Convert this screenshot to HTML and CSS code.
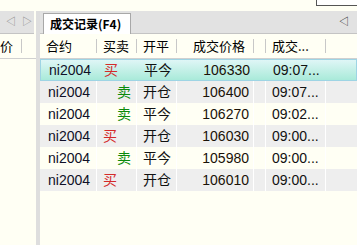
FILE: index.html
```html
<!DOCTYPE html>
<html>
<head>
    <meta charset="UTF-8" />
    <title>成交记录</title>
    <link rel="stylesheet" href="styles.css">
</head>
<body>
    <div class="top-strip">
        <div class="top-box"></div>
    </div>
    <div class="main">
        <div class="side">
            <div class="tab-bar side-bar">
                <span class="arrow">&#9665;</span>
                <span class="arrow">&#9655;</span>
            </div>
            <div class="head side-head">
                <div class="hcell">价</div>
            </div>
        </div>
        <div class="divider"></div>
        <div class="panel">
            <div class="tab-bar">
                <div class="tab">成交记录(F4)</div>
                <span class="arrow scroll">&#9665;</span>
            </div>
            <div class="row head">
                <div class="hcell">合约</div>
                <div class="hcell">买卖</div>
                <div class="hcell">开平</div>
                <div class="hcell price-head">成交价格</div>
                <div class="hcell"></div>
                <div class="hcell">成交...</div>
                <div></div>
            </div>
            <div id="rows"></div>
        </div>
    </div>

    <script>
        const trades = [
            { code: 'ni2004', side: '买', open: '平今', price: 106330, time: '09:07...' },
            { code: 'ni2004', side: '卖', open: '开仓', price: 106400, time: '09:07...' },
            { code: 'ni2004', side: '卖', open: '平今', price: 106270, time: '09:02...' },
            { code: 'ni2004', side: '买', open: '开仓', price: 106030, time: '09:00...' },
            { code: 'ni2004', side: '卖', open: '平今', price: 105980, time: '09:00...' },
            { code: 'ni2004', side: '买', open: '开仓', price: 106010, time: '09:00...' }
        ];

        const rows = document.getElementById('rows');
        trades.forEach((t, i) => {
            const row = document.createElement('div');
            row.className = 'row data' + (i === 0 ? ' selected' : (i % 2 ? ' odd' : ''));
            const sideClass = t.side === '买' ? 'buy' : 'sell';
            row.innerHTML =
                '<div class="cell code">' + t.code + '</div>' +
                '<div class="cell ' + sideClass + '">' + t.side + '</div>' +
                '<div class="cell">' + t.open + '</div>' +
                '<div class="cell price">' + t.price + '</div>' +
                '<div class="cell"></div>' +
                '<div class="cell">' + t.time + '</div>' +
                '<div class="cell last"></div>';
            rows.appendChild(row);
        });
    </script>
</body>
</html>
```

FILE: styles.css
```css
* {
    margin: 0;
    padding: 0;
    box-sizing: border-box;
}

body {
    background: #fffff4;
    font-family: "Liberation Sans", "Noto Sans CJK SC", sans-serif;
    font-size: 14px;
    color: #111;
    overflow: hidden;
}

.top-strip {
    height: 11px;
    display: flex;
    justify-content: flex-end;
}

.top-box {
    width: 41px;
    height: 6px;
    background: #fff;
    border-left: 1px solid #555;
    border-bottom: 1px solid #555;
}

.main {
    display: flex;
    height: 234px;
}

.side {
    width: 36px;
}

.divider {
    width: 4px;
    background: #dedede;
}

.panel {
    flex: 1;
}

.tab-bar {
    height: 23px;
    background: #e2e2e2;
    border-bottom: 1px solid #c4c4c4;
    display: flex;
    align-items: flex-end;
    padding-left: 3px;
}

.side-bar {
    width: 34px;
    align-items: center;
    padding-left: 6px;
    gap: 6px;
}

.arrow {
    font-size: 10px;
    color: #888;
    line-height: 1;
}

.scroll {
    margin-left: auto;
    margin-right: 8px;
    align-self: center;
    color: #222;
}

.tab {
    height: 21px;
    width: 88px;
    margin-bottom: -1px;
    background: #fff;
    border: 1px solid #a8a8a8;
    border-bottom: none;
    padding-left: 6px;
    font-family: "Noto Sans CJK SC", sans-serif;
    font-size: 12px;
    font-weight: bold;
    line-height: 20px;
    color: #000;
}

.row {
    display: grid;
    grid-template-columns: 57px 40px 40px 77px 12px 60px 1fr;
}

.head {
    height: 25px;
    border-bottom: 1px solid #d0d0d0;
    align-items: center;
}

.side-head {
    display: flex;
}

.side-head .hcell {
    width: 22px;
    padding-left: 0;
}

.hcell {
    height: 14px;
    line-height: 14px;
    padding-left: 6px;
    border-right: 1px solid #c8c8c8;
    font-family: "Noto Sans CJK SC", sans-serif;
    font-size: 13px;
    white-space: nowrap;
    color: #000;
}

.price-head {
    padding-left: 16px;
}

.data {
    height: 22px;
    line-height: 22px;
}

.data.odd {
    background: #eeeeee;
}

.data.selected {
    background: linear-gradient(#dff6f6, #a9ead9);
    border: 1px solid #9ed4e4;
    line-height: 20px;
}

.cell {
    border-right: 1px solid #fff;
    padding-left: 6px;
    white-space: nowrap;
    overflow: hidden;
}

.selected .cell {
    border-right-color: transparent;
}

.cell.last {
    border-right: none;
}

.code {
    color: #101028;
    padding-left: 8px;
}

.buy {
    color: #d42a2a;
    padding-left: 6px;
}

.sell {
    color: #0a8a0a;
    padding-left: 20px;
}

.price {
    text-align: right;
    padding-right: 4px;
    color: #1a1208;
}
```
